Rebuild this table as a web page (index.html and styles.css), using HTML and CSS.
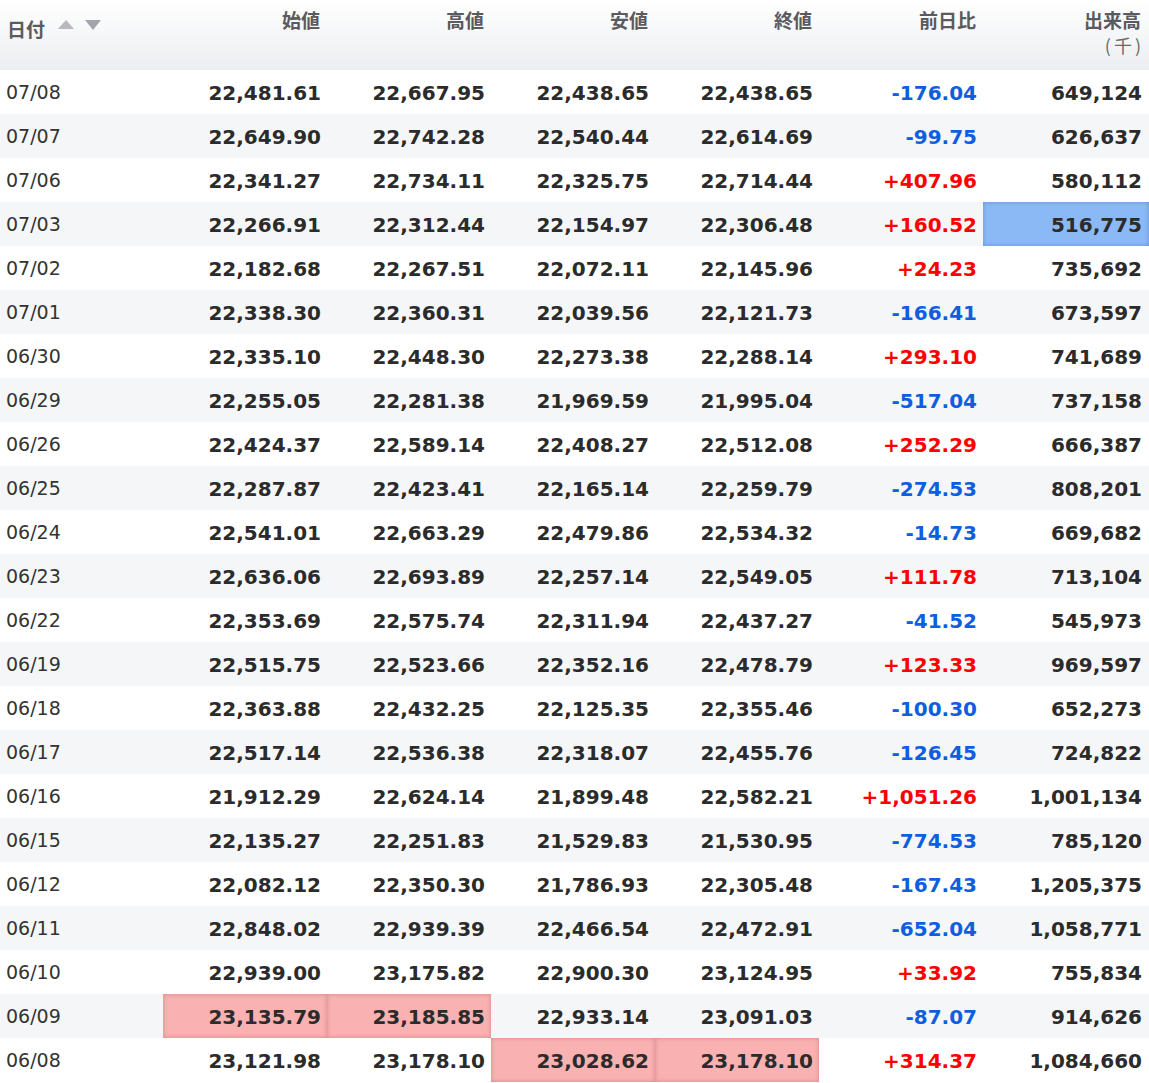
FILE: index.html
```html
<!DOCTYPE html>
<html lang="ja">
<head>
<meta charset="utf-8">
<title>株価</title>
<link rel="stylesheet" href="styles.css">
</head>
<body>
<table class="prices">
  <colgroup>
    <col class="c-date"><col class="c-num"><col class="c-num"><col class="c-num"><col class="c-num"><col class="c-num"><col class="c-vol">
  </colgroup>
  <thead>
    <tr>
      <th class="h-date"><span class="h-label">日付</span><span class="sort"><span class="tri up"></span><span class="tri down"></span></span></th>
      <th>始値</th>
      <th>高値</th>
      <th>安値</th>
      <th>終値</th>
      <th>前日比</th>
      <th><span class="h-line">出来高</span><span class="unit">(千)</span></th>
    </tr>
  </thead>
  <tbody>
    <tr><td class="d">07/08</td><td>22,481.61</td><td>22,667.95</td><td>22,438.65</td><td>22,438.65</td><td class="neg">-176.04</td><td>649,124</td></tr>
    <tr><td class="d">07/07</td><td>22,649.90</td><td>22,742.28</td><td>22,540.44</td><td>22,614.69</td><td class="neg">-99.75</td><td>626,637</td></tr>
    <tr><td class="d">07/06</td><td>22,341.27</td><td>22,734.11</td><td>22,325.75</td><td>22,714.44</td><td class="pos">+407.96</td><td>580,112</td></tr>
    <tr><td class="d">07/03</td><td>22,266.91</td><td>22,312.44</td><td>22,154.97</td><td>22,306.48</td><td class="pos">+160.52</td><td class="hl-blue">516,775</td></tr>
    <tr><td class="d">07/02</td><td>22,182.68</td><td>22,267.51</td><td>22,072.11</td><td>22,145.96</td><td class="pos">+24.23</td><td>735,692</td></tr>
    <tr><td class="d">07/01</td><td>22,338.30</td><td>22,360.31</td><td>22,039.56</td><td>22,121.73</td><td class="neg">-166.41</td><td>673,597</td></tr>
    <tr><td class="d">06/30</td><td>22,335.10</td><td>22,448.30</td><td>22,273.38</td><td>22,288.14</td><td class="pos">+293.10</td><td>741,689</td></tr>
    <tr><td class="d">06/29</td><td>22,255.05</td><td>22,281.38</td><td>21,969.59</td><td>21,995.04</td><td class="neg">-517.04</td><td>737,158</td></tr>
    <tr><td class="d">06/26</td><td>22,424.37</td><td>22,589.14</td><td>22,408.27</td><td>22,512.08</td><td class="pos">+252.29</td><td>666,387</td></tr>
    <tr><td class="d">06/25</td><td>22,287.87</td><td>22,423.41</td><td>22,165.14</td><td>22,259.79</td><td class="neg">-274.53</td><td>808,201</td></tr>
    <tr><td class="d">06/24</td><td>22,541.01</td><td>22,663.29</td><td>22,479.86</td><td>22,534.32</td><td class="neg">-14.73</td><td>669,682</td></tr>
    <tr><td class="d">06/23</td><td>22,636.06</td><td>22,693.89</td><td>22,257.14</td><td>22,549.05</td><td class="pos">+111.78</td><td>713,104</td></tr>
    <tr><td class="d">06/22</td><td>22,353.69</td><td>22,575.74</td><td>22,311.94</td><td>22,437.27</td><td class="neg">-41.52</td><td>545,973</td></tr>
    <tr><td class="d">06/19</td><td>22,515.75</td><td>22,523.66</td><td>22,352.16</td><td>22,478.79</td><td class="pos">+123.33</td><td>969,597</td></tr>
    <tr><td class="d">06/18</td><td>22,363.88</td><td>22,432.25</td><td>22,125.35</td><td>22,355.46</td><td class="neg">-100.30</td><td>652,273</td></tr>
    <tr><td class="d">06/17</td><td>22,517.14</td><td>22,536.38</td><td>22,318.07</td><td>22,455.76</td><td class="neg">-126.45</td><td>724,822</td></tr>
    <tr><td class="d">06/16</td><td>21,912.29</td><td>22,624.14</td><td>21,899.48</td><td>22,582.21</td><td class="pos">+1,051.26</td><td>1,001,134</td></tr>
    <tr><td class="d">06/15</td><td>22,135.27</td><td>22,251.83</td><td>21,529.83</td><td>21,530.95</td><td class="neg">-774.53</td><td>785,120</td></tr>
    <tr><td class="d">06/12</td><td>22,082.12</td><td>22,350.30</td><td>21,786.93</td><td>22,305.48</td><td class="neg">-167.43</td><td>1,205,375</td></tr>
    <tr><td class="d">06/11</td><td>22,848.02</td><td>22,939.39</td><td>22,466.54</td><td>22,472.91</td><td class="neg">-652.04</td><td>1,058,771</td></tr>
    <tr><td class="d">06/10</td><td>22,939.00</td><td>23,175.82</td><td>22,900.30</td><td>23,124.95</td><td class="pos">+33.92</td><td>755,834</td></tr>
    <tr><td class="d">06/09</td><td class="hl-red">23,135.79</td><td class="hl-red">23,185.85</td><td>22,933.14</td><td>23,091.03</td><td class="neg">-87.07</td><td>914,626</td></tr>
    <tr><td class="d">06/08</td><td>23,121.98</td><td>23,178.10</td><td class="hl-red">23,028.62</td><td class="hl-red">23,178.10</td><td class="pos">+314.37</td><td>1,084,660</td></tr>
  </tbody>
</table>
</body>
</html>
```

FILE: styles.css
```css
html, body {
  margin: 0;
  padding: 0;
  background: #ffffff;
}

.prices {
  width: 1149px;
  border-collapse: collapse;
  table-layout: fixed;
  font-family: "DejaVu Sans", "Noto Sans CJK JP", sans-serif;
  color: #2b2b2b;
}

.c-date { width: 163px; }
.c-num { width: 164px; }
.c-vol { width: 166px; }

.prices thead tr {
  height: 70px;
  background: linear-gradient(to bottom, #ffffff 0%, #eceef1 100%);
}

.prices th {
  font-family: "Noto Sans CJK JP", sans-serif;
  font-weight: 700;
  font-size: 19px;
  line-height: 24px;
  color: #5a5a5f;
  text-align: right;
  vertical-align: top;
  padding: 8px 7px 0 0;
}

.prices th:last-child {
  padding-right: 8px;
}

.h-line {
  display: block;
}

.prices th .unit {
  display: block;
  margin-top: 1px;
  font-weight: 400;
  font-size: 18px;
  letter-spacing: 3px;
  margin-right: -3px;
  color: #6a6a6a;
}

.prices th.h-date {
  text-align: left;
  padding: 14px 0 0 7px;
}

.h-label {
  display: inline-block;
  vertical-align: middle;
}

.sort {
  display: inline-flex;
  gap: 11px;
  margin-left: 13px;
  vertical-align: middle;
  position: relative;
  top: -4px;
}

.tri {
  width: 0;
  height: 0;
  border-left: 8px solid transparent;
  border-right: 8px solid transparent;
}

.tri.up {
  border-bottom: 9px solid #b9b9bd;
}

.tri.down {
  border-top: 10px solid #a4a4ab;
}

.prices tbody tr {
  height: 44px;
}

.prices tbody tr:nth-child(even) {
  background: #f5f6f8;
}

.prices td {
  font-size: 20px;
  font-weight: 700;
  text-align: right;
  padding: 2px 6px 0 0;
  vertical-align: middle;
  white-space: nowrap;
}

.prices td:last-child {
  padding-right: 7px;
}

.prices td.d {
  text-align: left;
  font-weight: 400;
  font-size: 19px;
  padding: 0 0 1px 6px;
  color: #333333;
}

.prices td.neg {
  color: #0e5fe0;
}

.prices td.pos {
  color: #ff0000;
}

.prices td.hl-red {
  background: #f9b1b1;
  box-shadow: inset 0 0 4px rgba(180, 80, 80, 0.45);
}

.prices td.hl-blue {
  background: #8bb9f6;
  box-shadow: inset 0 0 4px rgba(60, 100, 170, 0.5);
}
```
